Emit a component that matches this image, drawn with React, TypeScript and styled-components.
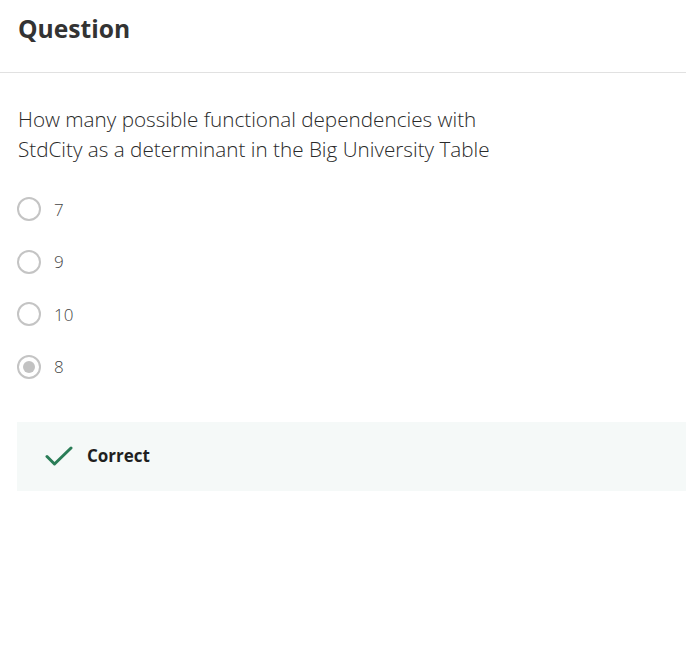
import React from "react";
import styled, { createGlobalStyle } from "styled-components";

const Global = createGlobalStyle`
  html, body { margin: 0; padding: 0; background: #fff; }
  body { font-family: "Open Sans", "Liberation Sans", sans-serif; }
`;

const Page = styled.div`
  width: 686px;
  overflow: hidden;
`;

const Header = styled.header`
  height: 72px;
  border-bottom: 1px solid #e1e1e1;
  padding: 0 18px;
  display: flex;
  align-items: flex-start;
`;

const Title = styled.h2`
  margin: 11px 0 0;
  font-size: 24.6px;
  line-height: 36px;
  font-weight: 700;
  color: #333;
`;

const Body = styled.section`
  padding: 31px 0 0 18px;
`;

const Prompt = styled.p`
  margin: 0;
  width: 490px;
  font-size: 20.7px;
  line-height: 30px;
  font-weight: 300;
  color: #2a2a2a;
`;

const Options = styled.div`
  margin-top: 33px;
  display: flex;
  flex-direction: column;
  gap: 28.5px;
`;

const Option = styled.label`
  display: flex;
  align-items: center;
  gap: 13px;
  height: 24px;
  font-size: 17px;
  font-weight: 300;
  color: #444;
`;

const Radio = styled.span<{ $checked?: boolean }>`
  box-sizing: border-box;
  width: 24px;
  height: 24px;
  margin-left: -1px;
  border-radius: 50%;
  border: 2px solid #c4c4c4;
  display: flex;
  align-items: center;
  justify-content: center;
  &::after {
    content: "";
    width: 12px;
    height: 12px;
    border-radius: 50%;
    background: ${(p) => (p.$checked ? "#c2c2c2" : "transparent")};
  }
`;

const Feedback = styled.div`
  margin-top: 43px;
  margin-left: -1px;
  height: 69px;
  background: #f5f9f8;
  display: flex;
  align-items: center;
  padding-left: 28px;
  gap: 14px;
`;

const FeedbackText = styled.span`
  font-size: 17px;
  font-weight: 700;
  color: #1f1f1f;
  margin-bottom: 1px;
`;

const CheckIcon = () => (
  <svg width="28" height="20" viewBox="0 0 28 20" fill="none">
    <path d="M2 10.5 L9.5 18 L26 2" stroke="#2a7d57" strokeWidth="3" strokeLinecap="round" strokeLinejoin="round" />
  </svg>
);

const options = [
  { label: "7", checked: false },
  { label: "9", checked: false },
  { label: "10", checked: false },
  { label: "8", checked: true },
];

export default function App() {
  return (
    <Page>
      <Global />
      <Header>
        <Title>Question</Title>
      </Header>
      <Body>
        <Prompt>
          How many possible functional dependencies with StdCity as a determinant in the Big University Table
        </Prompt>
        <Options>
          {options.map((o) => (
            <Option key={o.label}>
              <Radio $checked={o.checked} />
              {o.label}
            </Option>
          ))}
        </Options>
        <Feedback>
          <CheckIcon />
          <FeedbackText>Correct</FeedbackText>
        </Feedback>
      </Body>
    </Page>
  );
}
